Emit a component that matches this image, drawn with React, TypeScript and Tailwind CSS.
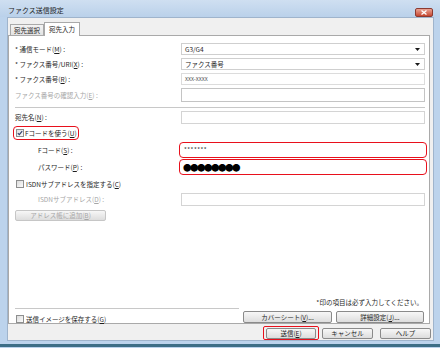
import type { ReactNode } from 'react';

const txt = 'text-[6.5px] leading-none text-[#1e1e1e] whitespace-nowrap';
const dim = 'text-[6.5px] leading-none text-[#a6a6a6] whitespace-nowrap';

function Check({ checked }: { checked?: boolean }) {
  return (
    <span className="w-[8px] h-[8px] shrink-0 border border-[#8e8f8f] bg-gradient-to-br from-[#dcdcdc] to-[#fbfbfb] flex items-center justify-center">
      {checked && (
        <svg width="6" height="6" viewBox="0 0 6 6">
          <path d="M0.8 3.1 L2.3 4.6 L5.2 1.1" stroke="#2b3f6e" strokeWidth="1.1" fill="none" />
        </svg>
      )}
    </span>
  );
}

function Btn({ children, className = '', disabled }: { children: ReactNode; className?: string; disabled?: boolean }) {
  return (
    <div
      className={`h-[11px] rounded-[2px] border bg-gradient-to-b from-[#f7f7f7] to-[#dddddd] flex items-center justify-center text-[6.5px] leading-none whitespace-nowrap ${
        disabled ? 'border-[#c6c6c6] text-[#a6a6a6]' : 'border-[#8a8a8a] text-[#1e1e1e]'
      } ${className}`}
    >
      {children}
    </div>
  );
}

function Select({ value }: { value: string }) {
  return (
    <div className="w-[244px] h-[12px] bg-white border border-[#cfcfcf] flex items-center justify-between pl-[3px] pr-[4px]">
      <span className={txt}>{value}</span>
      <svg width="5" height="3" viewBox="0 0 5 3">
        <path d="M0 0 H5 L2.5 3 Z" fill="#1a1a1a" />
      </svg>
    </div>
  );
}

function Row({ label, children, className = '', disabled, indent }: { label: ReactNode; children: ReactNode; className?: string; disabled?: boolean; indent?: boolean }) {
  return (
    <div className={`flex items-center ${className}`}>
      <div className={`w-[172px] ${indent ? 'pl-[29px]' : 'pl-[6px]'} ${disabled ? dim : txt}`}>{label}</div>
      {children}
    </div>
  );
}

export default function App() {
  return (
    <div className="w-[440px] h-[348px] bg-[#bcd3ec] flex flex-col font-['Noto_Sans_CJK_JP',sans-serif] overflow-hidden">
      {/* title bar */}
      <div className="h-[17px] shrink-0 bg-gradient-to-b from-[#cfdff1] to-[#bad1ea] flex items-start justify-between pl-[8px] pr-[7px]">
        <span className="mt-[7px] text-[7px] leading-none text-[#1b1b1b]">ファクス送信設定</span>
        <div className="mt-[8px] w-[18px] h-[9px] rounded-[2px] border border-[#8c3a30] bg-gradient-to-b from-[#e9a394] to-[#c5452f] flex items-center justify-center">
          <svg width="6" height="5" viewBox="0 0 6 5">
            <path d="M0.5 0.5 L5.5 4.5 M5.5 0.5 L0.5 4.5" stroke="white" strokeWidth="1.3" />
          </svg>
        </div>
      </div>

      {/* client area */}
      <div className="ml-[7px] w-[427px] h-[324px] shrink-0 bg-[#f0f0f0] border border-[#9fb4cc] flex flex-col">
        {/* tabs */}
        <div className="mt-[2px] pl-[2px] flex items-end h-[15px]">
          <div className={`h-[11px] px-[3px] border border-b-0 border-[#a9a9a9] bg-gradient-to-b from-[#f3f3f3] to-[#e3e3e3] flex items-center ${txt}`}>宛先選択</div>
          <div className={`h-[14px] px-[4px] border border-b-0 border-[#a9a9a9] bg-white flex items-center -mb-[1px] relative z-10 ${txt}`}>宛先入力</div>
        </div>

        {/* tab panel */}
        <div className="w-[422px] h-[289px] bg-white border border-[#a9a9a9] flex flex-col pt-[7px]">
          <Row label={<>* 通信モード(<u>M</u>) :</>}>
            <Select value="G3/G4" />
          </Row>
          <Row className="mt-[3px]" label={<>* ファクス番号/URI(<u>X</u>) :</>}>
            <Select value="ファクス番号" />
          </Row>
          <Row className="mt-[3px]" label={<>* ファクス番号(<u>R</u>) :</>}>
            <div className="w-[244px] h-[12px] bg-white border border-[#dcdcdc] flex items-center pl-[3px]">
              <span className="text-[6px] leading-none text-[#555]">xxx-xxxx</span>
            </div>
          </Row>
          <Row className="mt-[3px]" disabled label={<>ファクス番号の確認入力(<u>E</u>) :</>}>
            <div className="w-[244px] h-[14px] bg-white border border-[#c4c4c4]" />
          </Row>

          <div className="mt-[5px] ml-[6px] w-[410px] h-px bg-[#c8c8c8]" />

          <Row className="mt-[3px]" label={<>宛先名(<u>N</u>) :</>}>
            <div className="w-[244px] h-[13px] bg-white border border-[#d4d4d4]" />
          </Row>

          <div className="mt-[2px] ml-[4px] w-[66px] h-[14px] border-[1.5px] border-[#e8101c] rounded-[4px] flex items-center gap-[1px] pl-[2px]">
            <Check checked />
            <span className={txt}>Fコードを使う(<u>U</u>)</span>
          </div>

          <div className="mt-[2px] flex items-center">
            <div className={`w-[170px] pl-[29px] ${txt}`}>Fコード(<u>S</u>) :</div>
            <div className="w-[248px] h-[16px] border-[1.5px] border-[#e8101c] rounded-[4px] bg-white flex items-center pl-[4px]">
              <span className="text-[6px] leading-none text-[#333] tracking-[0.5px]">*******</span>
            </div>
          </div>
          <div className="mt-[1px] flex items-center">
            <div className={`w-[170px] pl-[29px] ${txt}`}>パスワード(<u>P</u>) :</div>
            <div className="w-[248px] h-[16px] border-[1.5px] border-[#e8101c] rounded-[4px] bg-white flex items-center pl-[3px]">
              <span className="text-[8.5px] leading-none text-black tracking-[-1.5px]">●●●●●●●●</span>
            </div>
          </div>

          <div className="mt-[4px] ml-[7px] h-[10px] flex items-center gap-[2px]">
            <Check />
            <span className={txt}>ISDNサブアドレスを指定する(<u>C</u>)</span>
          </div>

          <Row className="mt-[4px]" indent disabled label={<>ISDNサブアドレス(<u>D</u>) :</>}>
            <div className="w-[244px] h-[13px] bg-white border border-[#d4d4d4]" />
          </Row>

          <Btn disabled className="mt-[4px] ml-[6px] w-[91px]">
            アドレス帳に追加(<u>B</u>)
          </Btn>

          <div className="flex-1" />

          <div className={`self-end pr-[6px] ${txt}`}>*印の項目は必ず入力してください。</div>

          <div className="mt-[3px] flex items-start">
            <div className="ml-[6px] w-[224px] flex flex-col">
              <div className="h-px bg-[#c8c8c8]" />
              <div className="mt-[6px] ml-[1px] flex items-center gap-[2px]">
                <Check />
                <span className={txt}>送信イメージを保存する(<u>G</u>)</span>
              </div>
            </div>
            <div className="ml-[4px] mt-[3px] flex gap-[4px]">
              <Btn className="w-[89px] h-[12px]">カバーシート(<u>V</u>)...</Btn>
              <Btn className="w-[88px] h-[12px]">詳細設定(<u>J</u>)...</Btn>
            </div>
          </div>
        </div>

        {/* dialog buttons */}
        <div className="mt-[2px] flex items-center pl-[255px] gap-[3px]">
          <div className="w-[56px] h-[14px] border-[1.5px] border-[#e8101c] rounded-[2px] flex items-center justify-center">
            <Btn className="w-[50px] h-[10px] border-[#3c7fb1] from-[#eaf6fd] to-[#bee6fd]">送信(<u>E</u>)</Btn>
          </div>
          <Btn className="w-[51px] h-[11px]">キャンセル</Btn>
          <Btn className="ml-[4px] w-[51px] h-[11px]">ヘルプ</Btn>
        </div>
      </div>

      <div className="mt-[3px] h-[3px] bg-[#3d6e86]" />
    </div>
  );
}
